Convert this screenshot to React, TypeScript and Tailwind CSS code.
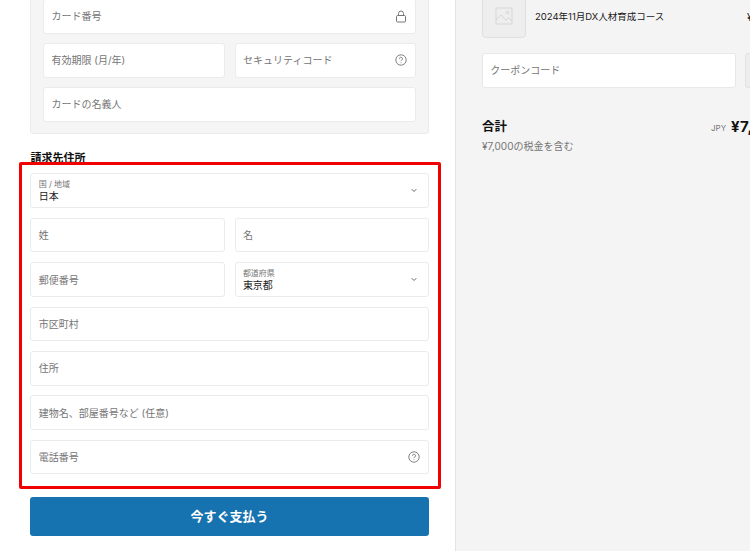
import React from "react";

const font = { fontFamily: '"Inter", "Noto Sans CJK JP", sans-serif' };

function Lock() {
  return (
    <svg width="12" height="13" viewBox="0 0 12 13" fill="none" stroke="#757575" strokeWidth="1">
      <rect x="1.5" y="5.5" width="9" height="6.5" rx="1" />
      <path d="M3.5 5.5V3.5a2.5 2.5 0 0 1 5 0v2" />
    </svg>
  );
}

function Help() {
  return (
    <svg width="12" height="12" viewBox="0 0 12 12" fill="none" stroke="#757575" strokeWidth="0.9">
      <circle cx="6" cy="6" r="5.2" />
      <path d="M4.5 4.8a1.5 1.5 0 1 1 2.3 1.2c-.5.3-.8.6-.8 1.1" />
      <path d="M6 8.4v.7" />
    </svg>
  );
}

function Chevron() {
  return (
    <svg width="6" height="5" viewBox="0 0 6 5" fill="none" stroke="#666666" strokeWidth="1">
      <path d="M0.7 1.2L3 3.5l2.3-2.3" />
    </svg>
  );
}

function Field({ label, icon, className = "" }: { label: string; icon?: React.ReactNode; className?: string }) {
  return (
    <div className={`flex h-[34.6px] min-w-0 items-center justify-between rounded-[3px] border border-[#ebebeb] bg-white pl-[7.3px] pr-[8px] ${className}`}>
      <span className="whitespace-nowrap pt-[1px] text-[10px] text-[#757575]">{label}</span>
      {icon}
    </div>
  );
}

function SelectField({ label, value, className = "" }: { label: string; value: string; className?: string }) {
  return (
    <div className={`flex h-[34.6px] min-w-0 items-center justify-between rounded-[3px] border border-[#ebebeb] bg-white pl-[7.3px] pr-[11px] ${className}`}>
      <div className="flex flex-col">
        <span className="text-[8px] leading-[11px] text-[#757575]">{label}</span>
        <span className="text-[10px] leading-[12px] text-[#1a1a1a]">{value}</span>
      </div>
      <Chevron />
    </div>
  );
}

export default function App() {
  return (
    <div className="flex h-[551px] w-[750px] overflow-hidden bg-white" style={font}>
      <div className="relative w-[456px] shrink-0 border-r border-[#e3e3e3] pl-[30.4px]">
        <div className="mt-[-14px] w-[398.4px] rounded-[3px] border border-[#ebebeb] bg-[#f5f5f5] px-[11.8px] pb-[11.6px] pt-3">
          <div className="flex flex-col gap-[9.4px]">
            <Field label="カード番号" icon={<Lock />} />
            <div className="flex gap-[9.5px]">
              <Field label="有効期限 (月/年)" className="w-[182px]" />
              <Field label="セキュリティコード" icon={<Help />} className="flex-1" />
            </div>
            <Field label="カードの名義人" />
          </div>
        </div>

        <h2 className="mt-[17px] text-[11px] font-bold leading-[14px] text-[#111]">請求先住所</h2>

        <div className="mt-[8.3px] flex w-[398.4px] flex-col gap-[9.8px]">
          <SelectField label="国 / 地域" value="日本" />
          <div className="grid grid-cols-2 gap-[10px]">
            <Field label="姓" />
            <Field label="名" />
          </div>
          <div className="grid grid-cols-2 gap-[10px]">
            <Field label="郵便番号" />
            <SelectField label="都道府県" value="東京都" />
          </div>
          <Field label="市区町村" />
          <Field label="住所" />
          <Field label="建物名、部屋番号など (任意)" />
          <Field label="電話番号" icon={<Help />} />
        </div>

        <button className="mt-[22.4px] flex h-[39.5px] w-[398.4px] items-center justify-center rounded-[3px] bg-[#1773b0] text-[13px] font-bold text-white">
          今すぐ支払う
        </button>

        <div className="pointer-events-none absolute left-[19px] top-[162px] h-[327px] w-[422px] rounded-[2px] border-[3px] border-[#f00000]" />
      </div>

      <div className="min-w-0 flex-1 bg-[#f4f4f4] pl-[26px]">
        <div className="flex w-[400px] items-center">
          <div className="relative mt-[-6px] flex h-[44px] w-[44px] shrink-0 items-center justify-center rounded-[4px] border border-[#e0e0e0] bg-[#eeeeee]">
            <svg width="18" height="18" viewBox="0 0 18 18" fill="none" stroke="#d6d6d6" strokeWidth="1">
              <rect x="1" y="1" width="16" height="16" />
              <path d="M1 13l5-5 5 5 2.5-2.5L17 14" />
              <circle cx="12.5" cy="5.5" r="1.3" />
            </svg>
            <span className="absolute right-[-2px] top-[-5px] h-[9px] w-[9px] rounded-full bg-[#6f6f6f]" />
          </div>
          <span className="ml-[9px] mt-[-4px] w-[212px] shrink-0 whitespace-nowrap text-[9.5px] leading-[12px] text-[#1a1a1a]">2024年11月DX人材育成コース</span>
          <span className="mt-[-4px] shrink-0 text-[10px] text-[#1a1a1a]">¥7,000</span>
        </div>

        <div className="mt-[15px] flex w-[400px] gap-[9px]">
          <div className="flex h-[34.6px] w-[254px] shrink-0 items-center rounded-[3px] border border-[#e8e8e8] bg-white pl-[7.3px]">
            <span className="whitespace-nowrap pt-[1px] text-[10px] text-[#757575]">クーポンコード</span>
          </div>
          <div className="h-[34.6px] w-[40px] shrink-0 rounded-[3px] border border-[#e2e2e2] bg-[#ededed]" />
        </div>

        <div className="mt-[30px] flex w-[400px] items-start">
          <div className="flex w-[229px] shrink-0 flex-col">
            <span className="text-[12.5px] font-bold leading-[18px] text-[#111]">合計</span>
            <span className="mt-[3px] whitespace-nowrap text-[10px] leading-[14px] text-[#757575]">¥7,000の税金を含む</span>
          </div>
          <span className="mt-[4px] w-[20px] shrink-0 text-[8px] leading-[12px] text-[#757575]">JPY</span>
          <span className="shrink-0 text-[15px] font-bold leading-[18px] tracking-[0.5px] text-[#111]">¥7,000</span>
        </div>
      </div>
    </div>
  );
}
